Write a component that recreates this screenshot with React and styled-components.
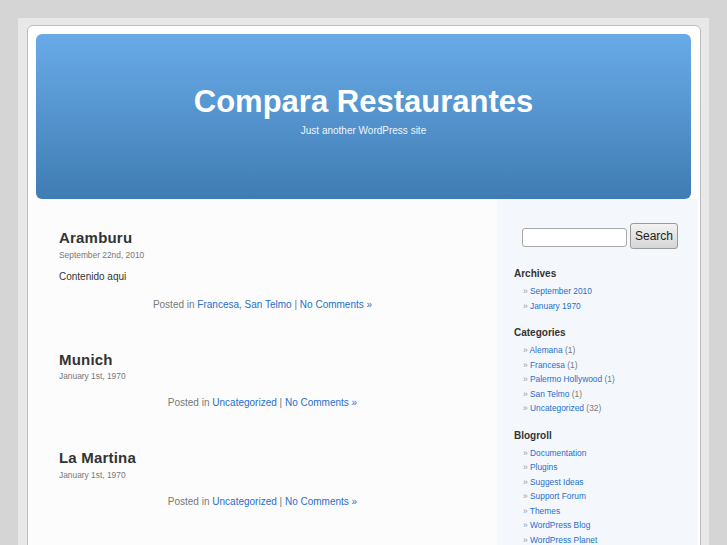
import styled, { createGlobalStyle } from "styled-components";

const GlobalStyle = createGlobalStyle`
  html, body {
    margin: 0;
    padding: 0;
    background: #d5d5d5;
    font-family: "Liberation Sans", Arial, sans-serif;
  }
`;

// Data
const posts = [
  {
    title: "Aramburu",
    date: "September 22nd, 2010",
    content: "Contenido aqui",
    cats: ["Francesa", "San Telmo"],
  },
  { title: "Munich", date: "January 1st, 1970", cats: ["Uncategorized"] },
  { title: "La Martina", date: "January 1st, 1970", cats: ["Uncategorized"] },
];

const archives = ["September 2010", "January 1970"];

const categories = [
  ["Alemana", 1],
  ["Francesa", 1],
  ["Palermo Hollywood", 1],
  ["San Telmo", 1],
  ["Uncategorized", 32],
];

const blogroll = [
  "Documentation",
  "Plugins",
  "Suggest Ideas",
  "Support Forum",
  "Themes",
  "WordPress Blog",
  "WordPress Planet",
];
//

const App = () => {
  return (
    <>
      <GlobalStyle />
      <Backdrop>
        <Page>
          <Header>
            <SiteTitle>Compara Restaurantes</SiteTitle>
            <Tagline>Just another WordPress site</Tagline>
          </Header>

          <Body>
            <Main>
              {posts.map((p) => (
                <Post key={p.title}>
                  <PostTitle>{p.title}</PostTitle>
                  <PostDate>{p.date}</PostDate>
                  {p.content && <Entry>{p.content}</Entry>}
                  <PostMeta>
                    Posted in{" "}
                    {p.cats.map((c, i) => (
                      <span key={c}>
                        {i > 0 && ", "}
                        <Link>{c}</Link>
                      </span>
                    ))}{" "}
                    | <Link>No Comments »</Link>
                  </PostMeta>
                </Post>
              ))}
            </Main>

            <Sidebar>
              <SearchForm>
                <SearchInput type="text" />
                <SearchButton type="button">Search</SearchButton>
              </SearchForm>

              <WidgetTitle>Archives</WidgetTitle>
              <WidgetList>
                {archives.map((a) => (
                  <li key={a}>
                    <Link>{a}</Link>
                  </li>
                ))}
              </WidgetList>

              <WidgetTitle>Categories</WidgetTitle>
              <WidgetList>
                {categories.map(([name, n]) => (
                  <li key={name}>
                    <Link>{name}</Link> <Count>({n})</Count>
                  </li>
                ))}
              </WidgetList>

              <WidgetTitle>Blogroll</WidgetTitle>
              <WidgetList>
                {blogroll.map((b) => (
                  <li key={b}>
                    <Link>{b}</Link>
                  </li>
                ))}
              </WidgetList>
            </Sidebar>
          </Body>
        </Page>
      </Backdrop>
    </>
  );
};

export default App;

const Backdrop = styled.div`
  box-sizing: border-box;
  margin: 18px 0 0 18px;
  width: 691px;
  height: 527px;
  overflow: hidden;
  background: #e8e8e8;
  padding: 7px 8px 0 9px;
`;

const Page = styled.div`
  box-sizing: border-box;
  width: 674px;
  height: 540px;
  background: #fff;
  border: 1px solid #bdbdbd;
  border-radius: 6px 6px 0 0;
  padding-top: 8px;
`;

const Header = styled.div`
  box-sizing: border-box;
  margin: 0 9px 0 8px;
  height: 165px;
  border-radius: 6px;
  background: linear-gradient(#69abe8, #3f7cb3);
  padding-top: 50px;
  text-align: center;
  color: #fff;
`;

const SiteTitle = styled.h1`
  margin: 0;
  font-size: 31px;
  line-height: 36px;
  font-weight: bold;
`;

const Tagline = styled.div`
  margin-top: 4px;
  font-size: 10px;
  line-height: 13px;
  color: #eef5fc;
`;

const Body = styled.div`
  display: grid;
  grid-template-columns: 469px 201px;
`;

const Main = styled.div`
  background: #fcfcfc;
  padding: 30px 0 0 31px;
  height: 400px;
`;

const Post = styled.div`
  margin-bottom: 40px;
`;

const PostTitle = styled.h2`
  margin: 0;
  font-size: 15px;
  line-height: 18px;
  font-weight: bold;
  color: #333;
  letter-spacing: 0.2px;
`;

const PostDate = styled.div`
  margin-top: 2.5px;
  font-size: 8.4px;
  line-height: 10px;
  color: #777;
`;

const Entry = styled.p`
  margin: 10px 0 0;
  font-size: 10px;
  line-height: 13px;
  color: #333;
`;

const PostMeta = styled.p`
  margin: 15px 0 0 -31px;
  font-size: 10px;
  line-height: 13px;
  color: #777;
  text-align: center;
`;

const Link = styled.a`
  color: #1f6fcc;
  text-decoration: none;
`;

const Sidebar = styled.div`
  background: #f4f8fc;
  padding: 24px 0 0 17px;
  height: 400px;
`;

const SearchForm = styled.div`
  display: flex;
  align-items: center;
  gap: 3px;
  padding-left: 8px;
`;

const SearchInput = styled.input`
  box-sizing: border-box;
  width: 105px;
  height: 19px;
  border: 1px solid #a8a8a8;
  border-radius: 3px;
  background: #fff;
  margin-top: 3px;
`;

const SearchButton = styled.button`
  box-sizing: border-box;
  width: 48px;
  height: 26px;
  padding: 0;
  border: 1px solid #9a9a9a;
  border-radius: 3px;
  background: linear-gradient(#f2f2f2, #d6d6d6);
  font-family: "Liberation Sans", Arial, sans-serif;
  font-size: 12px;
  color: #222;
`;

const WidgetTitle = styled.h3`
  margin: 18px 0 0;
  font-size: 10px;
  line-height: 13px;
  font-weight: bold;
  color: #333;

  & + ul + & {
    margin-top: 13px;
  }
`;

const WidgetList = styled.ul`
  list-style: none;
  margin: 4px 0 0;
  padding: 0 0 0 9px;

  li {
    font-size: 8.4px;
    line-height: 14.5px;
    color: #777;
  }

  li::before {
    content: "» ";
    color: #999;
  }
`;

const Count = styled.span`
  color: #777;
`;
